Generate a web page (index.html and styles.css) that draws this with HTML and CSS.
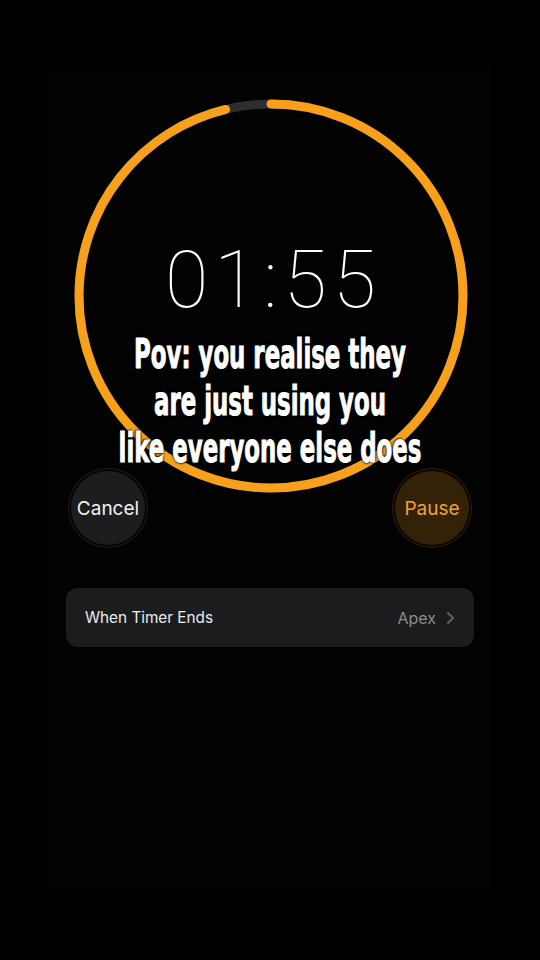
FILE: index.html
```html
<!DOCTYPE html>
<html>
<head>
<meta charset="utf-8">
<link rel="stylesheet" href="styles.css">
</head>
<body>
<div class="screen">
  <div class="panel">
    <div class="dial">
      <svg class="ring" width="400" height="400" viewBox="0 0 400 400">
        <circle cx="200" cy="200" r="192" fill="none" stroke="#2e2e30" stroke-width="9"/>
        <circle cx="200" cy="200" r="192" fill="none" stroke="#f7a01c" stroke-width="9" stroke-linecap="round" stroke-dasharray="1160 2000" transform="rotate(-90 200 200)"/>
      </svg>
      <div class="time">01:55</div>
    </div>
    <div class="controls">
      <div class="btn btn-cancel"><span class="btn-inner">Cancel</span></div>
      <div class="btn btn-pause"><span class="btn-inner">Pause</span></div>
    </div>
    <div class="row">
      <span class="row-label">When Timer Ends</span>
      <span class="row-value">Apex
        <svg class="chev" width="9" height="14" viewBox="0 0 9 14"><path d="M2 2l5 5-5 5" fill="none" stroke="#5e5e63" stroke-width="2" stroke-linecap="round" stroke-linejoin="round"/></svg>
      </span>
    </div>
  </div>
  <div class="caption">Pov: you realise they<br>are just using you<br>like everyone else does</div>
</div>
</body>
</html>
```
FILE: styles.css
```css
html, body {
  margin: 0;
  padding: 0;
  background: #000;
}
.screen {
  position: relative;
  width: 540px;
  height: 960px;
  background: #000;
  padding-top: 65px;
  box-sizing: border-box;
  font-family: "Inter", "Roboto", "Liberation Sans", sans-serif;
}
.panel {
  margin: 0 47px;
  height: 825px;
  background: #020203;
  padding-top: 31px;
  box-sizing: border-box;
}
.dial {
  position: relative;
  width: 400px;
  height: 400px;
  margin: 0 0 0 23.5px;
}
.ring {
  display: block;
}
.time {
  position: absolute;
  left: 0;
  right: 0;
  top: 140px;
  text-align: center;
  font-family: "Roboto", "Inter", sans-serif;
  font-weight: 100;
  font-size: 79px;
  line-height: 88px;
  letter-spacing: 6px;
  padding-left: 6px;
  color: #fff;
}
.controls {
  display: flex;
  justify-content: space-between;
  padding: 0 21px;
  margin-top: -28px;
}
.btn {
  width: 80px;
  height: 80px;
  border-radius: 50%;
  display: flex;
  align-items: center;
  justify-content: center;
  box-sizing: border-box;
}
.btn-inner {
  width: 74px;
  height: 74px;
  border-radius: 50%;
  display: flex;
  align-items: center;
  justify-content: center;
  font-size: 19px;
}
.btn-cancel {
  background: #1d1d1f;
}
.btn-cancel .btn-inner {
  background: #1d1d1f;
  box-shadow: 0 0 0 2px #050507;
  color: #f2f2f2;
}
.btn-pause {
  background: #2e1e06;
}
.btn-pause .btn-inner {
  background: #332207;
  box-shadow: 0 0 0 2px #0a0602;
  color: #f0a232;
}
.row {
  margin: 40px 19px 0;
  height: 59px;
  border-radius: 12px;
  background: #1c1c1f;
  display: flex;
  align-items: center;
  justify-content: space-between;
  padding: 0 19px 0 19px;
  font-size: 15.3px;
}
.row-label {
  color: #ececec;
}
.row-value {
  color: #8a8a8f;
  display: flex;
  align-items: center;
  gap: 10px;
  font-size: 16px;
}
.chev {
  display: block;
}
.caption {
  position: absolute;
  left: -100px;
  right: -100px;
  top: 331px;
  text-align: center;
  font-family: "DejaVu Sans Condensed", "Liberation Sans Narrow", "Liberation Sans", sans-serif;
  font-weight: 700;
  font-size: 41px;
  line-height: 47px;
  color: #fff;
  transform: scaleX(0.62);
  -webkit-text-stroke: 1px #fff;
  text-shadow: 0 0 3px #000, 1px 1px 2px #000, -1px -1px 2px #000;
}
```
